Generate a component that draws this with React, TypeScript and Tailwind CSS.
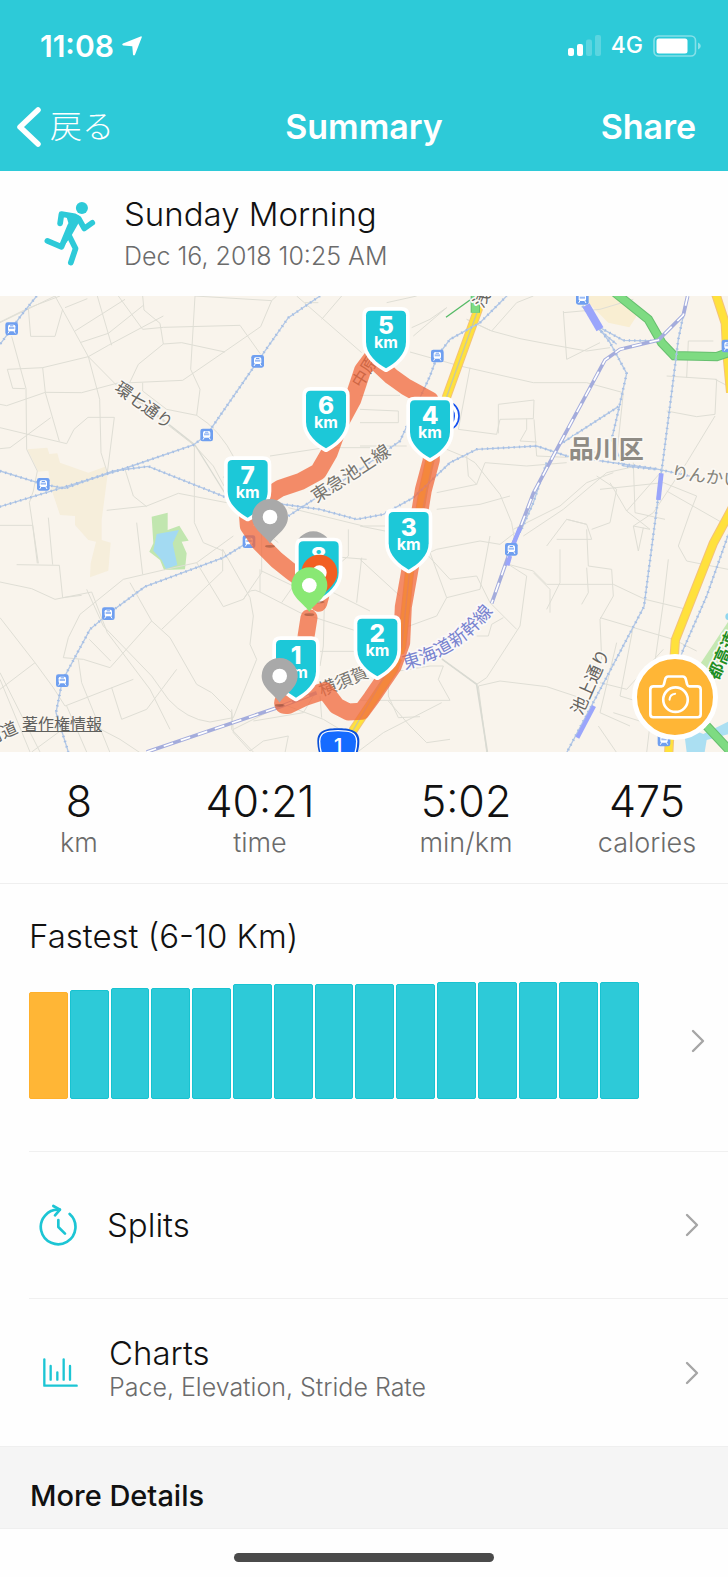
import type { ReactNode } from 'react';

const stats = [
  { value: '8', label: 'km' },
  { value: '40:21', label: 'time' },
  { value: '5:02', label: 'min/km' },
  { value: '475', label: 'calories' },
];

const paceBars = [107, 109, 111, 111, 111, 115, 115, 115, 115, 115, 117, 117, 117, 117, 117];

const stations = [
  [35, 98], [773, 196], [620, 417], [130, 565], [1312, 180], [1747, 7], [2184, 150],
  [747, 737], [325, 953], [187, 1154], [1534, 760], [1992, 1332],
];

const streets = [
  'M0 80L165 0L265 182L350 268L585 450L640 510L672 570',
  'M0 78L85 36L92 121H165L188 40M85 36L180 0',
  'M35 121L78 278L80 460L112 525L100 585L88 620L115 802',
  'M22 220L128 215L265 182L325 148L490 60M22 220L38 277L75 278',
  'M128 215L136 290L178 436M0 325L20 329L136 289L245 290L350 262L548 253L672 168L782 92L815 14',
  'M0 395L200 443L222 400L264 364H343L322 530L303 470L299 310L265 182M0 458L30 455L152 365',
  'M225 105L312 50L375 10M195 35L262 8M240 140L325 112L430 28M292 0L335 148M355 0L428 100L490 94L720 88L782 175',
  'M428 0L432 42L480 82L490 144L545 140L675 168M490 144L415 205L390 258M585 0L572 220L600 280L590 358L500 340L428 285V260',
  'M590 358Q660 400 705 490L670 545M583 450V680L610 740L670 765M585 0L815 14L830 0M890 0L1085 170M915 20L955 20M965 70L1025 0',
  'M810 480L975 455H1110M865 635L1090 690H1240M320 643L440 630L535 592L680 620M375 520L400 600L440 632M410 680L428 835',
  'M0 858L95 878L165 910L275 888L322 1010L450 1180L510 1300M50 806L178 808L188 905L245 898M145 665L158 806M0 688H98L112 802',
  'M0 965L105 1100L0 1180M105 1100L160 1175L195 1230L400 1150M190 1085L250 1090L330 1115L455 975L510 1025L590 1165L635 1190L695 1250V1300L760 1368',
  'M190 1085L205 1025L240 955L370 850L490 822L590 800L700 720M260 880L310 990L455 1140L505 1210Q560 1270 630 1278L700 1265L770 1090L750 1045L760 960L750 905L668 760V825L485 1000M390 860L455 975M268 1030L332 1095M235 1090L245 1160L330 1370',
  'M590 800L670 932L730 910L785 830V700L835 740M785 825L880 870L845 920M730 910Q750 870 780 888L900 950L1100 1015M780 888V820',
  'M0 1130L120 1368M0 1150L90 1368M95 1368L235 1265L360 1330L420 1370M200 1230L260 1368M335 1175L365 1270L440 1240L530 1120M695 1240L700 1310L750 1365L790 1335L865 1320L855 1370M760 1275L910 1250L940 1200',
  'M960 1110L970 1050L975 840L1045 780V700M1070 920L1085 785M975 780L1100 790M960 1066H1070M1000 890L1110 945M1080 790L1200 900M960 1200L965 1265M700 1300L850 1225L970 1270L1070 1330',
  'M1160 20L1250 0M1235 95L1290 70L1340 35L1240 120M1400 70L1475 105L1550 20L1600 0M1475 105L1560 128L1665 148L1760 165L1830 155M1470 103L1400 70',
  'M1230 168L1380 210L1600 260L1760 260L1870 290L1850 480M1410 215L1375 400L1490 415L1500 370L1600 368L1602 312L1495 325V412M1580 368L1580 400L1560 435L1610 438M1602 370L1610 480L1700 484L1800 465',
  'M1080 298H1200M1080 340L1195 345V380H1080M1080 450H1220M1340 460L1400 485L1425 500L1500 595L1535 680L1545 740M1400 480L1405 540L1430 565L1310 590M1430 565L1455 500L1580 510L1700 500',
  'M1310 640L1440 625L1530 600M1200 810L1310 760L1440 735L1500 745L1545 710M1080 690L1230 720L1350 850L1430 840L1470 920L1550 1000M1290 770L1340 905L1440 880L1470 720M1340 905L1310 960L1200 1000',
  'M1690 45L1700 190L1800 140M1690 50L1800 40L1900 10M1540 700L1680 630L1760 560L1840 530M1570 720L1690 640L1820 530L1910 510M1640 750L1700 670L1760 685L1775 730H1670M1700 670L1760 685',
  'M1525 805L1580 840L1560 990L1460 1145L1430 1165L1320 1085M1525 805L1600 825L1640 865H1840L1935 910L2060 940M1435 1170L1500 1155L1640 1172L1770 1215M1435 1170L1460 1368M1600 830L1650 880V950M1680 760V860L1640 940M1760 700L1765 810L1835 820L1840 900L1800 970L1805 1090',
  'M1760 815L1765 890L1745 925M1775 700L1830 680L1850 580L1790 540M1800 580L1990 560L2090 600M1830 560L1880 645L1990 520M1900 500L1905 650L1995 670M1880 645L1950 700L1900 690L1915 765L1930 695',
  'M2000 240L2150 250L2145 355L2090 362L2000 345M2065 135L2060 245M2065 135H2140M2145 250L2184 270M2145 360L2060 500L1960 650L1900 690M2000 585L2184 690M2090 600L2070 650L2035 750L2060 795L2184 820M2005 790L1990 920L1950 1200',
  'M1800 965L2020 1030L2090 1065M1900 990L1860 1200L1990 1240M1800 1160L1880 1180L1990 1060M1850 1040L1800 1250L1890 1290M1795 1290L1850 1370M1840 1250L1950 1285L1940 1370',
  'M1080 1213H1350L1315 1150L1330 1110L1290 1110L1165 1130V1200L1195 1265L1260 1262M1325 1220L1150 1310L1070 1370M1165 1215L1230 1290L1280 1340L1350 1330M1430 1020H1465L1475 985L1510 965',
];

const localRails = [
  'M110 0L62 60L35 98L0 145',
  'M960 0L865 65L773 196L620 417L580 447L360 522L180 577L0 632',
  'M0 525L130 565L195 577L340 525L445 511L680 605L865 627L960 640L1070 670L1150 655L1240 605L1350 500L1430 460L1610 450L1700 480L1965 518L2090 545',
  'M865 660L1080 520L1200 435L1290 240L1312 180L1350 130L1440 80L1500 20L1520 0',
  'M747 737L670 785L435 872L325 953L270 1000L187 1154L168 1250L205 1368',
  'M1747 30L1830 140L1880 232L1855 345L1835 430L1870 510L1970 520',
  'M1855 332L1680 445M1800 95L1870 133L1975 135M1790 95L1850 145',
  'M2062 0L2035 130L2010 330L1970 640L1932 932L1700 1370',
  'M2210 645L2120 900L2050 1060L2000 1200',
  'M1640 500L1600 620L1560 710',
];

const mainRails = [
  'M2063 0L2050 57L1975 132L1860 160L1815 192L1680 442L1600 592L1558 702L1535 752L1475 922',
  'M440 1368L840 1232L950 1190',
];

const yellowRoads = [
  'M1438 30L1340 302L1290 492L1270 582L1228 832L1205 1052L1180 1122L1060 1302L1030 1350',
  'M2146 -10L2176 82L2180 162L2192 290M2200 630L2140 742L2026 1032L2022 1092L2005 1390',
];

const greenRoad = 'M1426 -5V50M1845 -10L1945 70L1985 140L2022 179L2150 182L2190 168M2120 1290L2190 1365';

const route =
  'M927 965L918 1022L900 1110L850 1213Q842 1232 865 1228L910 1206L975 1184L1010 1230L1045 1248L1085 1246L1115 1205L1180 1110L1205 1040L1210 932L1228 832L1252 692L1270 582L1294 492L1290 312L1220 274L1175 242L1115 186L1088 222L1058 312L1020 382L988 470L955 527L900 557L840 577L795 606L742 652L745 690L780 742L830 792L880 832L935 870L962 900L956 922';

function Station({ x, y }: { x: number; y: number }) {
  return (
    <g transform={`translate(${x} ${y})`}>
      <rect x="-19" y="-19" width="38" height="38" rx="7" fill="#6f9ff0" />
      <rect x="-11" y="-12" width="22" height="20" rx="5" fill="#fff" />
      <rect x="-5" y="-10" width="10" height="3" fill="#6f9ff0" />
      <rect x="-8" y="-5" width="16" height="6" fill="#9dbdf5" />
      <path d="M-7 7l-4 7M7 7l4 7" stroke="#fff" strokeWidth="3" />
    </g>
  );
}

function KmMarker({ x, y, km }: { x: number; y: number; km: number }) {
  return (
    <g transform={`translate(${x} ${y})`}>
      <path
        d="M-46 0H46Q60 0 60 14V94C60 132 26 158 0 173C-26 158 -60 132 -60 94V14Q-60 0 -46 0Z"
        fill="#1cc8d8"
        stroke="#fff"
        strokeWidth="22"
        strokeLinejoin="round"
        paintOrder="stroke"
      />
      <g fill="#fff" textAnchor="middle">
        <text y="71" fontSize="73" className="font-extrabold">{km}</text>
        <text y="113" fontSize="48" className="font-bold">km</text>
      </g>
    </g>
  );
}

function Pin({ x, y, color }: { x: number; y: number; color: string }) {
  return (
    <g transform={`translate(${x} ${y})`}>
      <ellipse cy="88" rx="15" ry="4" fill="#5a2a1a" opacity="0.35" />
      <path d="M0 80C-12 58 -54 38 -54 0A54 54 0 0 1 54 0C54 38 12 58 0 80Z" fill={color} />
      <circle r="22" fill="#fff" />
    </g>
  );
}

interface MapLabelProps {
  x: number;
  y: number;
  rotate: number;
  color?: string;
  size?: number;
  children: ReactNode;
}

function MapLabel({ x, y, rotate, color = '#66645f', size = 50, children }: MapLabelProps) {
  return (
    <text
      transform={`translate(${x} ${y}) rotate(${rotate})`}
      fontSize={size}
      fill={color}
      stroke="#fbf8f3"
      strokeWidth="10"
      strokeLinejoin="round"
      paintOrder="stroke"
      textAnchor="middle"
      dominantBaseline="central"
    >
      {children}
    </text>
  );
}

function RouteMap() {
  return (
    <svg viewBox="0 0 2184 1368" className="block w-full font-normal" role="img" aria-label="Route map">
      <rect width="2184" height="1368" fill="#f9f4ec" />

      {/* Land areas and water */}
      <path d="M82 460L142 455L148 474L172 472L180 500L265 530L315 512L322 542L305 672V732L332 740L325 824L270 844L272 802L288 737L265 732L225 687V660L180 657L155 582L145 524L115 527Z" fill="#f6eedb" />
      <path d="M1740 0H1850L1920 45L1888 94L1825 80L1775 30Z" fill="#f9eed2" />
      <path d="M455 662L503 650V702L538 689L566 734L545 737L560 772L555 820L492 822L480 792L448 767L460 742Z" fill="#c1e6af" />
      <path d="M470 714L537 702L518 742L532 807L498 819L485 792L460 764Z" fill="#a3daf2" />
      <path d="M2090 1120L2184 978V1060L2130 1160Z" fill="#c5e8b2" />
      <path d="M2050 1290L2110 1314L2184 1277V1315L2120 1332L2114 1368H2060Z" fill="#abdff2" />
      <circle cx="2186" cy="962" r="10" fill="#8fd6ee" />

      {/* Streets */}
      <g fill="none" stroke="#dfded5" strokeWidth="3">
        {streets.map((d) => (
          <path key={d} d={d} />
        ))}
      </g>
      <path d="M350 262L585 447L680 600" fill="none" stroke="#d9dad2" strokeWidth="4" />
      <path d="M1320 1085L1430 1165L1462 1368" fill="none" stroke="#d9dad2" strokeWidth="5" />

      {/* Highways */}
      <g fill="none">
        {yellowRoads.map((d) => (
          <g key={d}>
            <path d={d} stroke="#f3c27a" strokeWidth="28" />
            <path d={d} stroke="#ffe13c" strokeWidth="22" />
          </g>
        ))}
        <path d="M1438 30L1340 302L1228 832L1205 1052L1060 1302" stroke="#c9c7a0" strokeWidth="4" />
        <path d={greenRoad} stroke="#67bf6f" strokeWidth="28" />
        <path d={greenRoad} stroke="#7edb82" strokeWidth="22" />
        <path d="M1410 12L1338 64" stroke="#54ba65" strokeWidth="4" />
      </g>

      {/* Railways */}
      <g fill="none">
        {localRails.map((d) => (
          <g key={d}>
            <path d={d} stroke="#b3c8e6" strokeWidth="4" />
            <path d={d} stroke="#a6bfe4" strokeWidth="8" strokeDasharray="4 12" />
          </g>
        ))}
        {mainRails.map((d) => (
          <g key={d}>
            <path d={d} stroke="#a4acdc" strokeWidth="11" />
            <path d={d} stroke="#fff" strokeWidth="5" strokeDasharray="30 24" />
          </g>
        ))}
        <path d="M1758 28L1800 100" stroke="#9aa5fb" strokeWidth="24" />
        <path d="M1984 532L1975 612" stroke="#9aa5fb" strokeWidth="14" />
        <path d="M1782 1230L1732 1325" stroke="#9aa5fb" strokeWidth="13" />
        <path d="M1560 695L1540 745M1530 780L1522 808" stroke="#9aa5fb" strokeWidth="13" />
      </g>

      {stations.map(([x, y]) => (
        <Station key={`${x}-${y}`} x={x} y={y} />
      ))}

      {/* Road signs */}
      <ellipse cx="1345" cy="360" rx="32" ry="40" fill="#fff" stroke="#1450f0" strokeWidth="5" />
      <ellipse cx="1345" cy="360" rx="20" ry="28" fill="#1450f0" />
      <path d="M1014 1297C1045 1297 1078 1300 1078 1335C1078 1390 1040 1430 1014 1430S952 1390 952 1335C952 1300 985 1297 1014 1297Z" fill="#0b50d8" />
      <path d="M1014 1304C1043 1304 1070 1306 1070 1336C1070 1386 1038 1422 1014 1422S959 1386 959 1336C959 1306 986 1304 1014 1304Z" fill="#156bff" stroke="#fff" strokeWidth="4" />
      <text x="1014" y="1367" fontSize="58" fill="#fff" textAnchor="middle" className="font-semibold">1</text>

      {/* Place and line names */}
      <MapLabel x={432} y={327} rotate={36}>環七通り</MapLabel>
      <MapLabel x={1052} y={532} rotate={-33} color="#77756f" size={54}>東急池上線</MapLabel>
      <MapLabel x={1094} y={226} rotate={-58}>中原</MapLabel>
      <MapLabel x={1445} y={8} rotate={-62}>浅</MapLabel>
      <MapLabel x={1770} y={1157} rotate={-66} size={52}>池上通り</MapLabel>
      <MapLabel x={1030} y={1154} rotate={-22} color="#77756f" size={52}>横須賀</MapLabel>
      <MapLabel x={4} y={1312} rotate={-24}>街道</MapLabel>
      <MapLabel x={2118} y={540} rotate={7} color="#85837a" size={52}>りんかい</MapLabel>
      <g className="font-bold">
        <MapLabel x={2167} y={1079} rotate={-66} color="#1f8f24">都高速</MapLabel>
        <MapLabel x={1819} y={458} rotate={0} color="#8f8b84" size={75}>品川区</MapLabel>
      </g>
      <path id="shinkansen" d="M1214 1120Q1390 1075 1492 930" fill="none" />
      <text fontSize="54" fill="#7883cf" stroke="#fbf8f8" strokeWidth="10" paintOrder="stroke">
        <textPath href="#shinkansen">東海道新幹線</textPath>
      </text>

      <path d={route} fill="none" stroke="#f0683c" strokeWidth="51" strokeLinecap="round" strokeLinejoin="round" opacity="0.75" />

      {/* Markers, back to front */}
      <KmMarker x={1158} y={44} km={5} />
      <KmMarker x={978} y={284} km={6} />
      <KmMarker x={1290} y={313} km={4} />
      <KmMarker x={743} y={492} km={7} />
      <Pin x={810} y={663} color="#a9a9a9" />
      <KmMarker x={1226} y={648} km={3} />
      <Pin x={940} y={760} color="#a9a9a9" />
      <KmMarker x={956} y={736} km={8} />
      <Pin x={958} y={830} color="#f25f22" />
      <Pin x={928} y={868} color="#89e874" />
      <KmMarker x={888} y={1032} km={1} />
      <Pin x={839} y={1140} color="#a9a9a9" />
      <KmMarker x={1132} y={968} km={2} />
    </svg>
  );
}

function Chevron() {
  return (
    <svg viewBox="0 0 14 24" className="h-6 w-[14px] shrink-0" fill="none" stroke="#a6a6a6" strokeWidth="2.4" strokeLinecap="round" strokeLinejoin="round">
      <path d="M2 2l10 10L2 22" />
    </svg>
  );
}

function StatusBar() {
  return (
    <div className="flex h-[91px] items-center justify-between pr-[27px] pl-10 text-white">
      <div className="flex items-center gap-2">
        <span className="text-[30px] leading-none font-semibold">11:08</span>
        <svg viewBox="0 0 20 20" className="h-5 w-5" fill="#fff">
          <path d="M18.6.4Q20.2 0 19.7 1.6L13 18.8Q12 20.4 11 18.8L10.3 10.2L1.2 9.4Q-.6 8.6 1 7.4Z" />
        </svg>
      </div>
      <div className="flex items-center gap-[10px]">
        <svg viewBox="0 0 33 21" className="h-[21px] w-[33px]" fill="#fff">
          <rect y="13" width="6" height="8" rx="2" />
          <rect x="9" y="9" width="6" height="12" rx="2" />
          <rect x="18" y="4.5" width="6" height="16.5" rx="2" opacity="0.22" />
          <rect x="27" width="6" height="21" rx="2" opacity="0.22" />
        </svg>
        <span className="text-[23px] leading-none font-medium">4G</span>
        <svg viewBox="0 0 48 22" className="h-[22px] w-12">
          <rect x="1" y="1" width="41.5" height="20" rx="4.5" fill="none" stroke="#fff" strokeWidth="1.6" opacity="0.42" />
          <rect x="3.5" y="3.5" width="31" height="15" rx="2.5" fill="#fff" />
          <path d="M45 7.5q2.8 1 2.8 3.5t-2.8 3.5z" fill="#fff" opacity="0.45" />
        </svg>
      </div>
    </div>
  );
}

function RunnerIcon() {
  return (
    <svg viewBox="130 548 155 194" className="h-[65px] w-[52px]" fill="none" stroke="#2dcad8" strokeWidth="17" strokeLinecap="round" strokeLinejoin="round">
      <circle cx="243" cy="569" r="18" fill="#2dcad8" stroke="none" />
      <path d="M178 615L182 587L222 594L234 601L250 630L274 613" />
      <path d="M190 586L234 592L240 602L210 655L182 692L178 684L204 618L198 598Z" fill="#2dcad8" stroke="none" />
      <path d="M140 667L182 685L208 622M202 646L224 690L210 732" />
    </svg>
  );
}

function SplitsIcon() {
  return (
    <svg viewBox="118 134 117 129" className="h-[43px] w-[39px]" fill="none" stroke="#1cc5d4" strokeWidth="8" strokeLinecap="round" strokeLinejoin="round">
      <path d="M210 164A52 52 0 1 1 180 151" />
      <path d="M161 140L181 151L166 168" />
      <path d="M176 182V203L196 223" />
    </svg>
  );
}

function ChartsIcon() {
  return (
    <svg viewBox="129 594 105 87" className="h-[29px] w-[35px]" fill="none" stroke="#1cc5d4" strokeWidth="7" strokeLinecap="round" strokeLinejoin="round">
      <path d="M133 598V677H230" />
      <path d="M152 618V659M172 637V659M191 598V659M210 618V659" />
    </svg>
  );
}

export default function App() {
  return (
    <div className="min-h-screen bg-[#fefefe] font-['Inter','Noto_Sans_CJK_JP',sans-serif] font-light text-[#111]">
      <header className="bg-[#2dcad8] text-white">
        <StatusBar />
        <nav className="grid h-20 grid-cols-3 items-center pr-8 pb-2 pl-4">
          <button className="flex items-center gap-2 text-[32px] leading-10">
            <svg viewBox="0 0 26 42" className="h-[42px] w-[26px]" fill="none" stroke="#fff" strokeWidth="5.5" strokeLinecap="round" strokeLinejoin="round">
              <path d="M22 4L4 21L22 38" />
            </svg>
            戻る
          </button>
          <h1 className="pl-4 text-center text-[34px] leading-10 font-semibold">Summary</h1>
          <button className="justify-self-end text-[34px] leading-10 font-semibold">Share</button>
        </nav>
      </header>

      <section className="flex h-[125px] items-center gap-7 pl-11">
        <RunnerIcon />
        <div>
          <h2 className="text-[33px] leading-[44px]">Sunday Morning</h2>
          <p className="text-[25px] leading-10 text-[#6b6b6b]">Dec 16, 2018 10:25 AM</p>
        </div>
      </section>

      <section className="relative">
        <RouteMap />
        <a href="#legal" className="absolute bottom-4 left-[22px] text-base font-normal text-[#5f5f5c] underline">
          著作権情報
        </a>
        <button
          aria-label="Add photo"
          className="absolute right-[10px] bottom-3 flex h-[86px] w-[86px] items-center justify-center rounded-full border-[5px] border-white bg-[#ffb636]"
        >
          <svg viewBox="0 0 160 132" className="h-[44px] w-[53px]" fill="none" stroke="#fff" strokeWidth="8" strokeLinecap="round" strokeLinejoin="round">
            <path d="M14 34H38Q43 34 45 28L49 12Q51 4 58 4H102Q109 4 111 12L115 28Q117 34 122 34H146Q156 34 156 43V118Q156 127 147 127H13Q4 127 4 118V43Q4 34 14 34Z" />
            <circle cx="80" cy="74" r="37" />
            <path d="M62 74Q63 58 79 56" strokeWidth="6" />
          </svg>
        </button>
      </section>

      <dl className="grid grid-cols-[158fr_204fr_208fr_154fr] border-b border-[#efefef] pt-6 pr-1 pb-6 text-center">
        {stats.map((s) => (
          <div key={s.label} className="flex flex-col-reverse">
            <dt className="text-[27px] leading-8 text-[#6b6b6b]">{s.label}</dt>
            <dd className="text-[43px] leading-[51px]">{s.value}</dd>
          </div>
        ))}
      </dl>

      <section className="ml-[29px] border-b border-[#f0f0f0] pt-8 pb-[52px]">
        <h2 className="text-[33px] leading-10">Fastest (6-10 Km)</h2>
        <div className="mt-[26px] flex items-center justify-between pr-[23px]">
          <div className="mr-[52px] flex h-[117px] flex-1 items-end gap-[2px]">
            {paceBars.map((h, i) => (
              <div
                key={i}
                className={`flex-1 rounded-[2px] border ${i === 0 ? 'border-[#ffb02b] bg-[#ffb636]' : 'border-[#17c3d1] bg-[#2dcad8]'}`}
                style={{ height: h }}
              />
            ))}
          </div>
          <button aria-label="Fastest details">
            <Chevron />
          </button>
        </div>
      </section>

      <button className="flex h-[147px] w-full pl-[29px] text-left">
        <span className="flex h-full flex-1 items-center border-b border-[#f0f0f0] pr-[29px] pl-[10px]">
          <SplitsIcon />
          <span className="ml-[29px] flex-1 text-[33px] leading-10">Splits</span>
          <Chevron />
        </span>
      </button>

      <button className="flex h-[147px] w-full items-center pr-[29px] pl-[43px] text-left">
        <ChartsIcon />
        <span className="ml-[31px] flex-1 pb-2">
          <span className="block text-[33px] leading-[36px]">Charts</span>
          <span className="block text-[25px] leading-8 text-[#6b6b6b]">Pace, Elevation, Stride Rate</span>
        </span>
        <Chevron />
      </button>

      <section className="flex h-[83px] items-end border-y border-[#efefef] bg-[#f5f5f5] pb-3 pl-[30px]">
        <h2 className="text-[29px] leading-10 font-medium">More Details</h2>
      </section>

      <footer className="flex justify-center pt-6 pb-4">
        <div className="h-[9px] w-[260px] rounded-full bg-[#4a4a4a]" />
      </footer>
    </div>
  );
}
